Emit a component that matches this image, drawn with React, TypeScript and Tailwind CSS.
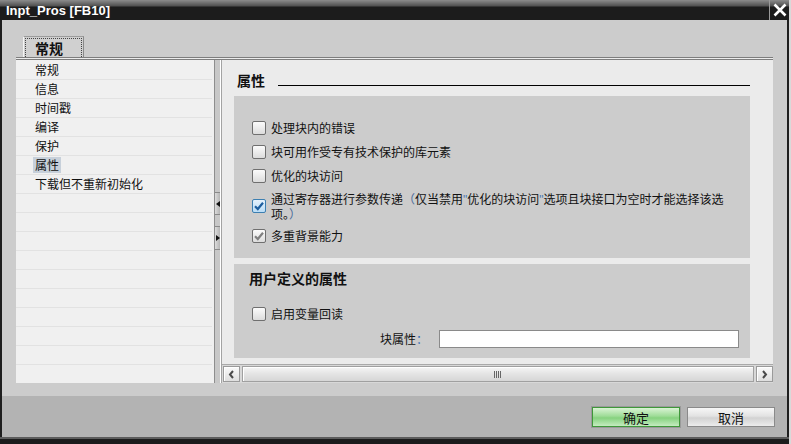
import React from 'react';

const NAV = ['常规', '信息', '时间戳', '编译', '保护', '属性', '下载但不重新初始化'];

function CheckBox({ checked, variant }: { checked?: boolean; variant?: 'blue' | 'gray' }) {
  const bg =
    variant === 'blue'
      ? 'bg-[linear-gradient(to_bottom,#e3f1fc,#b9dcf6)] border-[#3c7fb1]'
      : 'bg-[linear-gradient(to_bottom,#fbfbfb,#dcdcdc)] border-[#6f6f6f]';
  return (
    <span className={`relative flex h-[14px] w-[14px] shrink-0 items-center justify-center rounded-[2px] border ${bg}`}>
      {checked && (
        <svg width="12" height="12" viewBox="0 0 12 12">
          <path
            d="M2 6.2 L4.8 9 L10 2.8"
            fill="none"
            stroke={variant === 'blue' ? '#1d5e9e' : '#808080'}
            strokeWidth="2.2"
          />
        </svg>
      )}
    </span>
  );
}

function Chevron({ dir }: { dir: 'left' | 'right' }) {
  return (
    <svg width="7" height="9" viewBox="0 0 7 9">
      <path
        d={dir === 'left' ? 'M5 1 L2 4.5 L5 8' : 'M2 1 L5 4.5 L2 8'}
        fill="none"
        stroke="#4a4a4a"
        strokeWidth="2"
      />
    </svg>
  );
}

export default function App() {
  return (
    <div
      className="w-[791px] h-[444px] bg-[#d9d9d9] overflow-hidden text-[12px] text-[#111]"
      style={{ fontFamily: '"Noto Sans CJK SC", "Liberation Sans", sans-serif' }}
    >
      <div className="w-[789px] h-[444px] flex flex-col">
        {/* Title bar */}
        <div className="h-[20px] flex items-center bg-[linear-gradient(to_bottom,#8c8c8c,#505050_6px,#1c1c1c_7px,#1c1c1c)]">
          <span
            className="pl-[6px] text-[13px] font-bold text-white leading-none flex-1"
            style={{ fontFamily: '"Liberation Sans", sans-serif' }}
          >
            Inpt_Pros [FB10]
          </span>
          <div className="h-[20px] w-[1px] bg-[#9a9a9a]" />
          <div className="w-[19px] h-[20px] flex items-center justify-center">
            <svg width="14" height="14" viewBox="0 0 14 14">
              <path d="M1.5 1.5 L12.5 12.5 M12.5 1.5 L1.5 12.5" stroke="#fff" strokeWidth="2.6" />
            </svg>
          </div>
        </div>

        {/* Body */}
        <div className="h-[376px] bg-[#cccccc] border-l-[2px] border-r-[2px] border-[#1e1e1e] flex flex-col pt-[16px]">
          {/* Tab */}
          <div className="h-[21px] pl-[21px] flex">
            <div className="w-[61px] h-[21px] bg-[#d0d0d0] border-t border-l border-r border-t-[#9c9c9c] border-l-[#f4f4f4] border-r-[#8a8a8a] p-[1px] pb-0">
              <div className="h-full border border-dotted border-[#444] border-b-0 flex items-center pl-[9px] text-[14px] font-bold leading-none">
                常规
              </div>
            </div>
          </div>

          {/* Panel */}
          <div className="ml-[14px] w-[757px] flex flex-col">
            <div className="h-[3px] border-y border-[#7d7d7d] bg-[#ececec]" />
            <div className="h-[323px] flex">
              {/* Left nav list */}
              <div className="w-[198px] bg-[#f0f0f0] pt-[1px] overflow-hidden">
                {Array.from({ length: 17 }).map((_, i) => (
                  <div key={i} className="h-[19px] border-b border-[#e2e2e2] mr-[2px] flex items-center pl-[17px]">
                    {NAV[i] && (
                      <span
                        className={`px-[2px] h-[16px] flex items-center leading-none ${
                          NAV[i] === '属性' ? 'bg-[#c7d0da]' : ''
                        }`}
                      >
                        {NAV[i]}
                      </span>
                    )}
                  </div>
                ))}
              </div>

              {/* Splitter */}
              <div className="w-[8px] bg-[#c8c8c8] border-l border-r border-l-[#8e8e8e] border-r-[#a3a3a3] shadow-[inset_-1px_0_0_#ffffff] flex flex-col">
                <div className="mt-[132px] h-[23px] w-[5px] bg-[linear-gradient(to_right,#dcdcdc,#b4b4b4)] border-y border-[#8a8a8a] flex items-center justify-center">
                  <svg width="4" height="6" viewBox="0 0 4 6">
                    <path d="M4 0 L0 3 L4 6 Z" fill="#111" />
                  </svg>
                </div>
                <div className="mt-[11px] h-[24px] w-[5px] bg-[linear-gradient(to_right,#dcdcdc,#b4b4b4)] border-y border-[#8a8a8a] flex items-center justify-center">
                  <svg width="4" height="6" viewBox="0 0 4 6">
                    <path d="M0 0 L4 3 L0 6 Z" fill="#111" />
                  </svg>
                </div>
              </div>

              {/* Right content */}
              <div className="flex-1 bg-[#ebebeb] flex flex-col">
                <div className="flex-1 flex flex-col pl-[12px] pr-[23px]">
                  <div className="mt-[12px] h-[16px] flex items-end pl-[3px]">
                    <span className="text-[14px] font-bold leading-[16px]">属性</span>
                    <div className="flex-1 h-[1px] bg-black ml-[13px] mb-[2px]" />
                  </div>

                  <div className="mt-[8px] h-[162px] bg-[#cccccc] pt-[20px] pl-[18px] flex flex-col">
                    <div className="h-[24px] flex items-center gap-[5px]">
                      <CheckBox />
                      <span>处理块内的错误</span>
                    </div>
                    <div className="h-[24px] flex items-center gap-[5px]">
                      <CheckBox />
                      <span>块可用作受专有技术保护的库元素</span>
                    </div>
                    <div className="h-[24px] flex items-center gap-[5px]">
                      <CheckBox />
                      <span>优化的块访问</span>
                    </div>
                    <div className="h-[36px] flex items-center gap-[5px]">
                      <CheckBox checked variant="blue" />
                      <div className="flex flex-col leading-[14px] whitespace-nowrap">
                        <span>
                          通过寄存器进行参数传递<span className="text-[#4a6a9a]">（</span>仅当禁用
                          <span className="text-[#4a78b0]" style={{ fontFamily: '"Liberation Sans", sans-serif' }}>"</span>
                          优化的块访问
                          <span className="text-[#4a78b0]" style={{ fontFamily: '"Liberation Sans", sans-serif' }}>"</span>
                          选项且块接口为空时才能选择该选
                        </span>
                        <span>
                          项。<span className="text-[#4a6a9a]">）</span>
                        </span>
                      </div>
                    </div>
                    <div className="h-[24px] flex items-center gap-[5px]">
                      <CheckBox checked variant="gray" />
                      <span>多重背景能力</span>
                    </div>
                  </div>

                  <div className="mt-[6px] h-[94px] bg-[#cccccc] pt-[6px] flex flex-col">
                    <div className="h-[16px] pl-[15px] text-[14px] font-bold leading-[16px]">用户定义的属性</div>
                    <div className="mt-[16px] h-[24px] pl-[18px] flex items-center gap-[5px]">
                      <CheckBox />
                      <span>启用变量回读</span>
                    </div>
                    <div className="mt-[2px] h-[22px] pl-[146px] flex items-center">
                      <span>
                        块属性<span className="text-[#2f6db5]">：</span>
                      </span>
                      <div className="ml-[11px] w-[300px] h-[18px] bg-white border border-[#8a8a8a]" />
                    </div>
                  </div>
                </div>

                {/* Horizontal scrollbar */}
                <div className="h-[19px] border-t border-[#a9a9a9] bg-[#d8d8d8] flex items-stretch gap-[2px] pl-[1px] pb-[1px] pt-[1px]">
                  <div className="w-[17px] border border-[#9a9a9a] bg-[linear-gradient(to_bottom,#fafafa,#dedede)] shadow-[inset_1px_1px_0_#ffffff] flex items-center justify-center">
                    <Chevron dir="left" />
                  </div>
                  <div className="flex-1 border border-[#a0a0a0] bg-[linear-gradient(to_bottom,#f6f6f6,#e4e4e4_50%,#d6d6d6)] shadow-[inset_1px_1px_0_#ffffff] flex items-center justify-center">
                    <svg width="8" height="7" viewBox="0 0 8 7">
                      <path d="M0.5 0 V7 M2.5 0 V7 M4.5 0 V7 M6.5 0 V7" stroke="#666" strokeWidth="1" />
                    </svg>
                  </div>
                  <div className="w-[17px] border border-[#9a9a9a] bg-[linear-gradient(to_bottom,#fafafa,#dedede)] shadow-[inset_1px_1px_0_#ffffff] flex items-center justify-center">
                    <Chevron dir="right" />
                  </div>
                </div>
              </div>
            </div>
          </div>
        </div>

        {/* Button bar */}
        <div className="h-[41px] bg-[#b3b3b3] border-l-[2px] border-r-[2px] border-[#1e1e1e] flex justify-end items-start pt-[11px] pr-[12px] gap-[7px]">
          <button className="w-[88px] h-[20px] border border-[#3f973a] shadow-[0_0_0_1px_#9a9a9a] bg-[linear-gradient(to_bottom,#d9f3d4,#9edc97_45%,#86d27f_55%,#c4ecbf)] text-[13px] leading-none flex items-center justify-center">
            确定
          </button>
          <button className="w-[88px] h-[20px] border border-[#8a8a8a] bg-[linear-gradient(to_bottom,#f7f7f7,#e2e2e2_45%,#d2d2d2_55%,#ececec)] text-[13px] leading-none flex items-center justify-center">
            取消
          </button>
        </div>
        <div className="h-[2px] bg-[#5c5c5c]" />
        <div className="flex-1 bg-[#1c1c1c]" />
      </div>
    </div>
  );
}
